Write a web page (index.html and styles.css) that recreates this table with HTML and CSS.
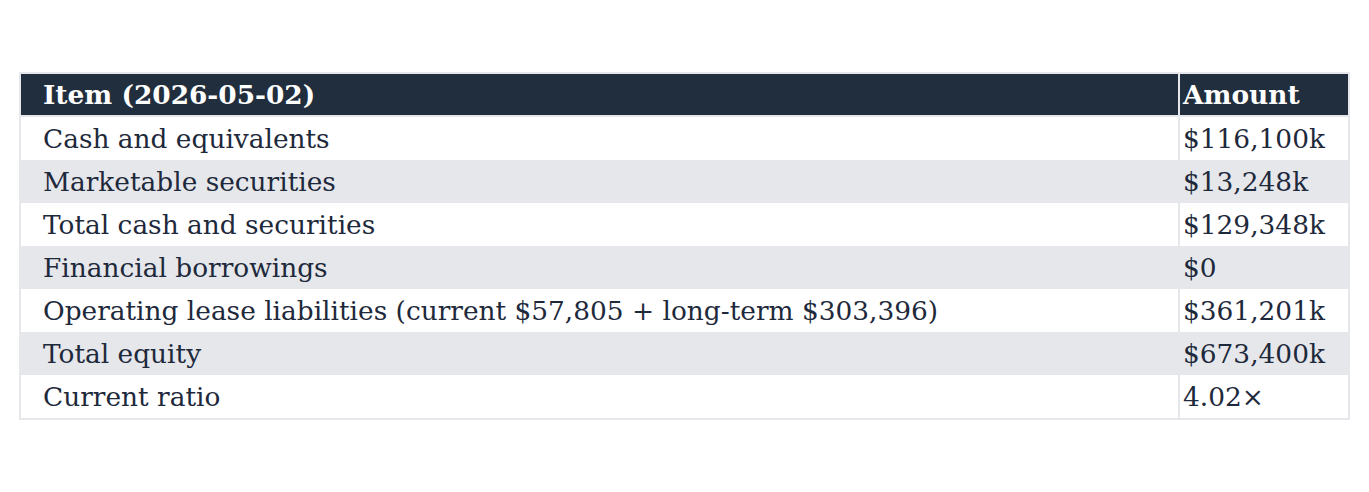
FILE: index.html
```html
<!DOCTYPE html>
<html>
<head>
<meta charset="utf-8">
<link rel="stylesheet" href="styles.css">
</head>
<body>
<div class="wrap">
<table class="sheet">
<thead>
<tr><th class="item">Item (2026-05-02)</th><th class="amt">Amount</th></tr>
</thead>
<tbody>
<tr><td class="item">Cash and equivalents</td><td class="amt">$116,100k</td></tr>
<tr class="alt"><td class="item">Marketable securities</td><td class="amt">$13,248k</td></tr>
<tr><td class="item">Total cash and securities</td><td class="amt">$129,348k</td></tr>
<tr class="alt"><td class="item">Financial borrowings</td><td class="amt">$0</td></tr>
<tr><td class="item">Operating lease liabilities (current $57,805 + long-term $303,396)</td><td class="amt">$361,201k</td></tr>
<tr class="alt"><td class="item">Total equity</td><td class="amt">$673,400k</td></tr>
<tr><td class="item">Current ratio</td><td class="amt">4.02×</td></tr>
</tbody>
</table>
</div>
</body>
</html>
```
FILE: styles.css
```css
html, body { margin: 0; padding: 0; background: #ffffff; }
.wrap { padding: 72px 19px 0 19px; }
.sheet {
  width: 1331px;
  border-collapse: collapse;
  font-family: "DejaVu Serif", serif;
  font-size: 26.4px;
  color: #1e293b;
  border: 2px solid #e5e7eb;
}
.sheet th, .sheet td {
  height: 43px;
  padding: 0;
  text-align: left;
  vertical-align: middle;
  border: 2px solid #e5e7eb;
  border-top: none;
  border-bottom: none;
}
.sheet thead th {
  height: 41px;
  background: #212e3e;
  color: #ffffff;
  font-weight: bold;
  border-bottom: 2px solid #e5e7eb;
}
.sheet .item { padding-left: 22px; }
.sheet .amt { width: 165px; padding-left: 3px; }
.sheet tr.alt td { background: #e5e7eb; }
```
